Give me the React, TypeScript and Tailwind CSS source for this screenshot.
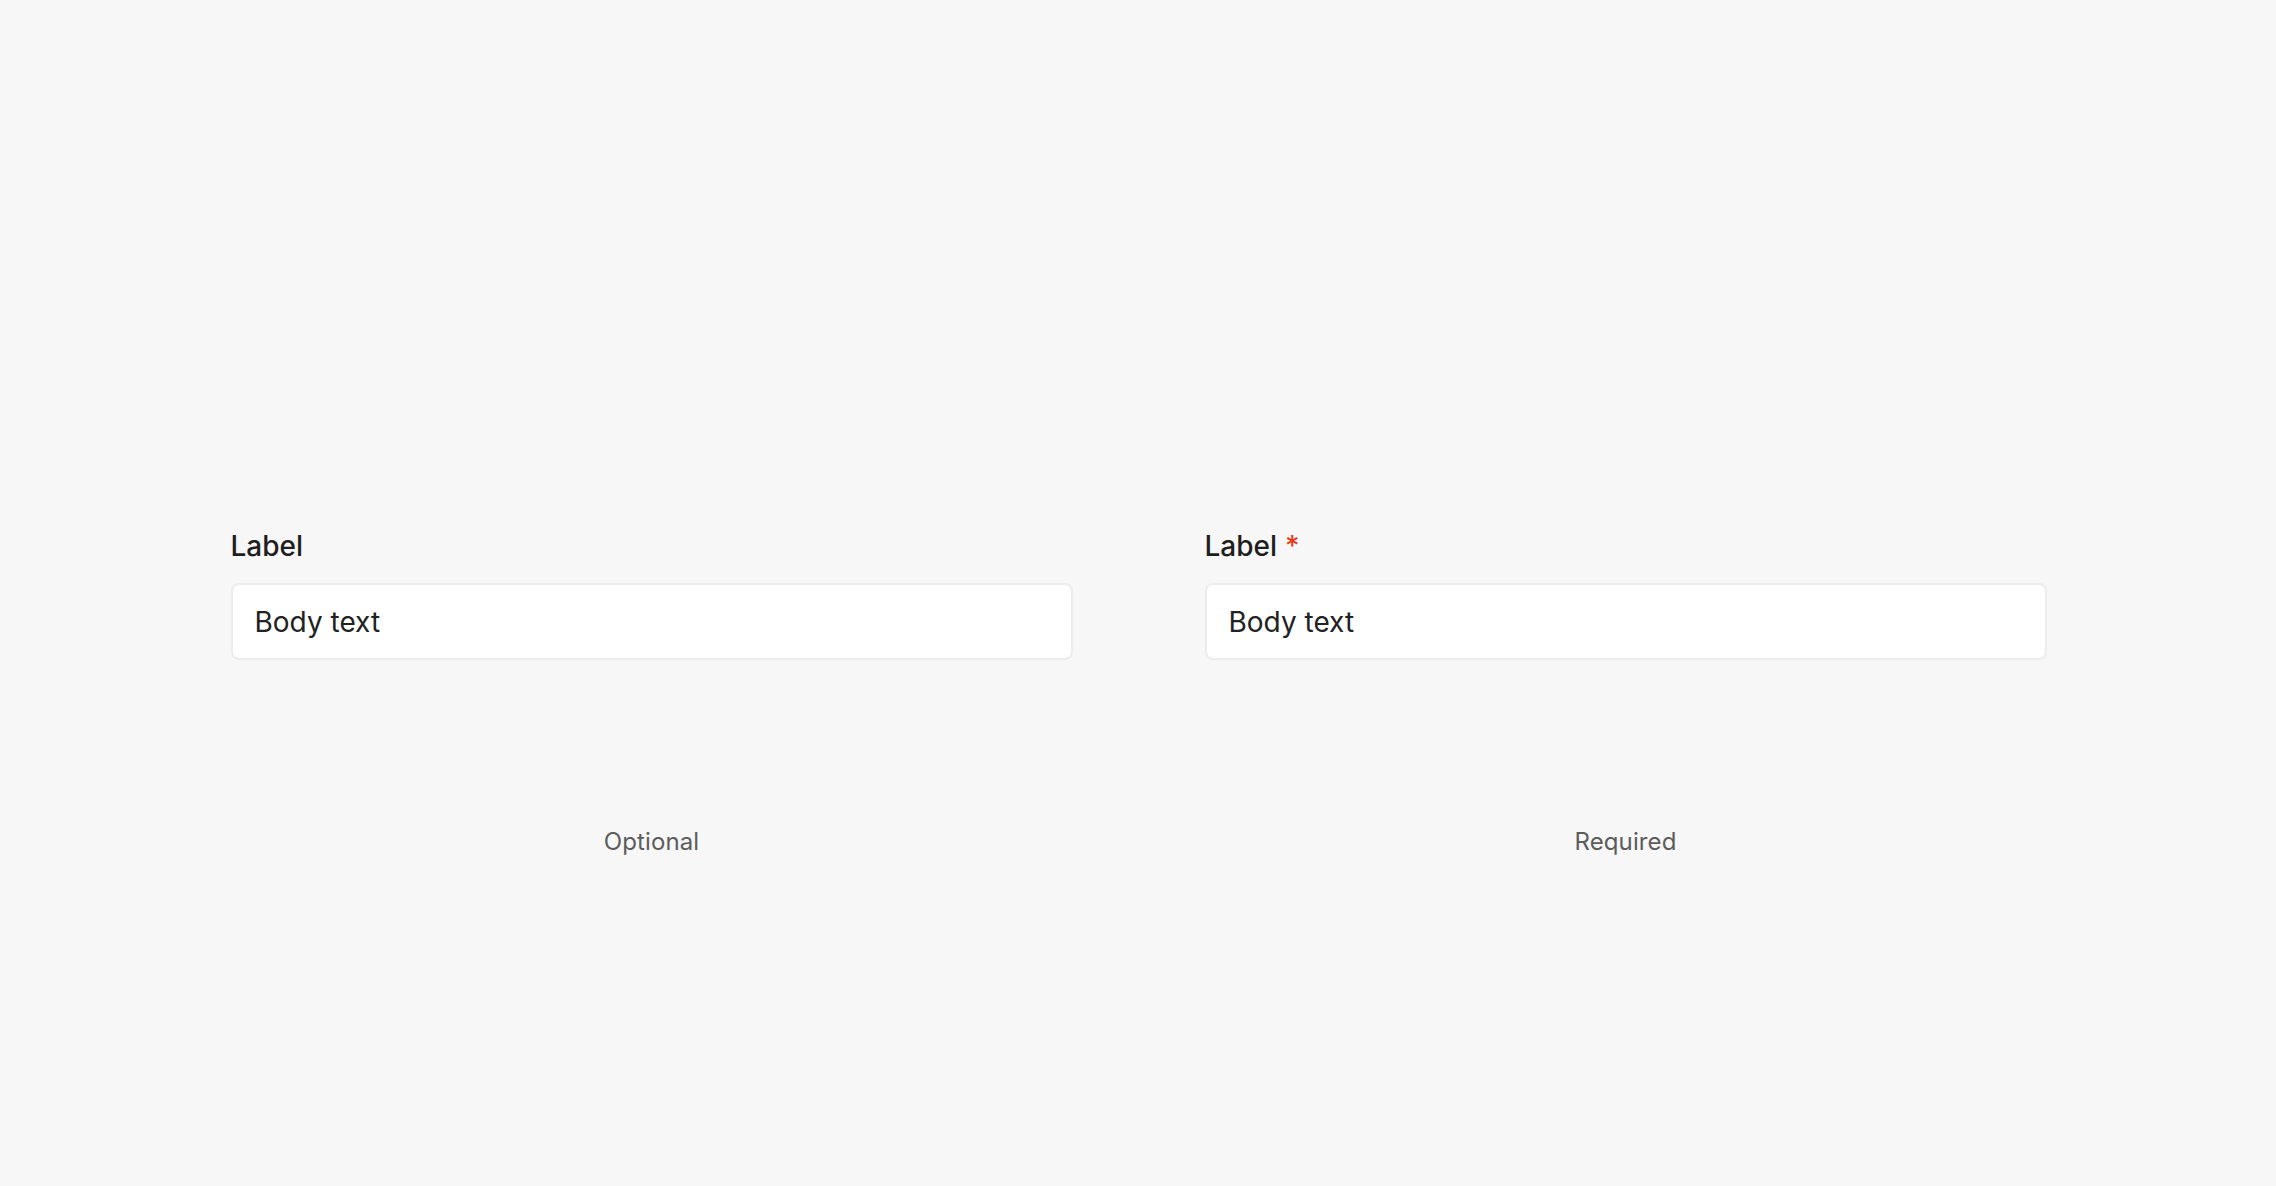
import React from "react";

function Field({ required, caption }: { required?: boolean; caption: string }) {
  return (
    <div className="flex flex-col w-[842px]">
      <div className="flex items-center text-[28px] leading-[36px] font-medium text-[#1e1e1e]">
        <span>Label</span>
        {required && <span className="ml-[8px] text-[#e63a17]">*</span>}
      </div>
      <div className="mt-[19px] h-[77px] rounded-[8px] border-2 border-[#ececec] bg-white flex items-center px-[22px] text-[28px] leading-[36px] text-[#222222]">
        Body text
      </div>
      <div className="mt-[166px] text-center text-[24px] leading-[32px] tracking-[0.1px] text-[#5c5c5c]">{caption}</div>
    </div>
  );
}

export default function App() {
  return (
    <div
      className="w-full min-h-screen bg-[#f7f7f7] pt-[528px]"
      style={{ fontFamily: "Inter, 'Noto Sans', sans-serif" }}
    >
      <div className="flex justify-center gap-[132px] pl-[1px]">
        <Field caption="Optional" />
        <Field required caption="Required" />
      </div>
    </div>
  );
}
